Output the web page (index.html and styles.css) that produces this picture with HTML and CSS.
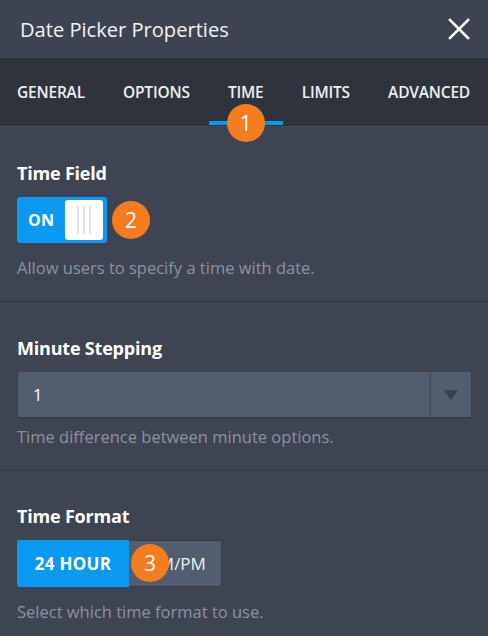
FILE: index.html
```html
<!DOCTYPE html>
<html lang="en">
<head>
<meta charset="utf-8">
<title>Date Picker Properties</title>
<link rel="stylesheet" href="styles.css">
</head>
<body>
<div class="panel">
  <header class="header">
    <h1 class="title">Date Picker Properties</h1>
    <button class="close" aria-label="Close">
      <svg width="22" height="22" viewBox="0 0 22 22"><path d="M2 2 L20 20 M20 2 L2 20" stroke="#fff" stroke-width="2.6" stroke-linecap="square"/></svg>
    </button>
  </header>
  <nav class="tabs">
    <span class="tab">GENERAL</span>
    <span class="tab">OPTIONS</span>
    <span class="tab active">TIME<span class="badge badge-tab">1</span></span>
    <span class="tab">LIMITS</span>
    <span class="tab">ADVANCED</span>
  </nav>
  <section class="section">
    <h2 class="label">Time Field</h2>
    <div class="row">
      <div class="toggle">
        <span class="toggle-text">ON</span>
        <span class="knob"><i></i><i></i><i></i></span>
      </div>
      <span class="badge badge-inline">2</span>
    </div>
    <p class="desc">Allow users to specify a time with date.</p>
  </section>
  <section class="section">
    <h2 class="label">Minute Stepping</h2>
    <div class="select">
      <span class="select-value">1</span>
      <span class="select-arrow"><svg width="14" height="10" viewBox="0 0 14 10"><path d="M0 0 H14 L7 10 Z" fill="#3a404b"/></svg></span>
    </div>
    <p class="desc">Time difference between minute options.</p>
  </section>
  <section class="section last">
    <h2 class="label">Time Format</h2>
    <div class="seg-wrap">
      <div class="seg">
        <span class="seg-btn on">24 HOUR</span>
        <span class="seg-btn off">AM/PM</span>
      </div>
      <span class="badge badge-seg">3</span>
    </div>
    <p class="desc">Select which time format to use.</p>
  </section>
</div>
</body>
</html>
```
FILE: styles.css
```css
* { box-sizing: border-box; }
html, body { margin: 0; padding: 0; }
body {
  background: #3e4451;
  font-family: "Open Sans", "Noto Sans", sans-serif;
  color: #fff;
  width: 488px;
  height: 636px;
  overflow: hidden;
}
.panel { display: flex; flex-direction: column; }
.header {
  height: 58px;
  background: #3d4350;
  display: flex;
  align-items: center;
  justify-content: space-between;
  padding: 0 17px 0 20px;
}
.title {
  margin: 0;
  font-weight: 400;
  font-size: 20.1px;
  color: #f2f4f7;
}
.close {
  background: none;
  border: 0;
  padding: 0;
  width: 24px;
  height: 24px;
  display: flex;
  align-items: center;
  justify-content: center;
}
.tabs {
  height: 69px;
  background: #2f333c;
  display: flex;
  align-items: center;
  justify-content: space-between;
  padding: 0 18px 0 17px;
  border-bottom: 1px solid #454b57;
}
.tab {
  position: relative;
  font-size: 15.5px;
  font-weight: 600;
  letter-spacing: -0.2px;
  color: #eef0f3;
  line-height: 20px;
}
.tab.active::after {
  content: "";
  position: absolute;
  left: -19px;
  right: -19px;
  top: 39px;
  height: 4px;
  background: #0a99f0;
}
.badge {
  display: flex;
  align-items: center;
  justify-content: center;
  width: 38px;
  height: 38px;
  border-radius: 50%;
  background: #f57c1f;
  color: #fff;
  font-size: 21px;
  font-weight: 400;
  letter-spacing: 0;
}
.badge-tab {
  position: absolute;
  left: 50%;
  top: 22px;
  margin-left: -19px;
  z-index: 2;
}
.section {
  padding: 36px 17px 23px 17px;
  border-bottom: 1px solid #353a45;
}
.section.last { border-bottom: 0; padding-top: 35px; }
.label {
  margin: 0 0 14px 0;
  font-size: 18px;
  font-weight: 700;
  letter-spacing: -0.2px;
  color: #fff;
  line-height: 20px;
}
.row { display: flex; align-items: center; gap: 3px; }
.toggle {
  width: 90px;
  height: 46px;
  background: #0a99f0;
  border-radius: 3px;
  display: flex;
  align-items: center;
  justify-content: space-between;
  padding: 3px 4px 3px 11px;
}
.toggle-text {
  font-size: 16px;
  font-weight: 700;
  letter-spacing: 0.3px;
}
.knob {
  width: 38px;
  height: 40px;
  background: #fff;
  border-radius: 3px;
  display: flex;
  align-items: center;
  justify-content: center;
  gap: 4px;
}
.knob i {
  display: block;
  width: 2px;
  height: 28px;
  background: #e2e4e8;
}
.badge-inline { margin-left: 2px; }
.desc {
  margin: 15px 0 0 0;
  font-size: 16.5px;
  color: #8b93a3;
  line-height: 20px;
}
.select {
  margin-left: 1px;
  height: 45px;
  background: #525d6f;
  display: flex;
  border-radius: 1px;
  box-shadow: 0 1px 2px rgba(0,0,0,0.25);
}
.select-value {
  flex: 1;
  display: flex;
  align-items: center;
  padding-left: 15px;
  font-size: 16.5px;
}
.select-arrow {
  width: 41px;
  border-left: 1px solid #424857;
  display: flex;
  align-items: center;
  justify-content: center;
}
.section:nth-of-type(2) .desc { margin-top: 10px; }
.seg-wrap { position: relative; display: flex; }
.seg {
  display: flex;
  height: 47px;
  border-radius: 2px;
  overflow: hidden;
}
.seg-btn {
  display: flex;
  align-items: center;
  justify-content: center;
  font-size: 17px;
  font-weight: 700;
}
.seg-btn.on {
  width: 112px;
  background: #0a99f0;
  letter-spacing: 0.3px;
}
.seg-btn.off {
  width: 93px;
  background: #525d6f;
  border: 1px solid #343944;
  border-left: 0;
  font-weight: 400;
  padding-left: 4px;
  color: #eef0f3;
}
.badge-seg {
  position: absolute;
  left: 114px;
  top: 4px;
}
.section.last .desc { margin-top: 15px; }
```
